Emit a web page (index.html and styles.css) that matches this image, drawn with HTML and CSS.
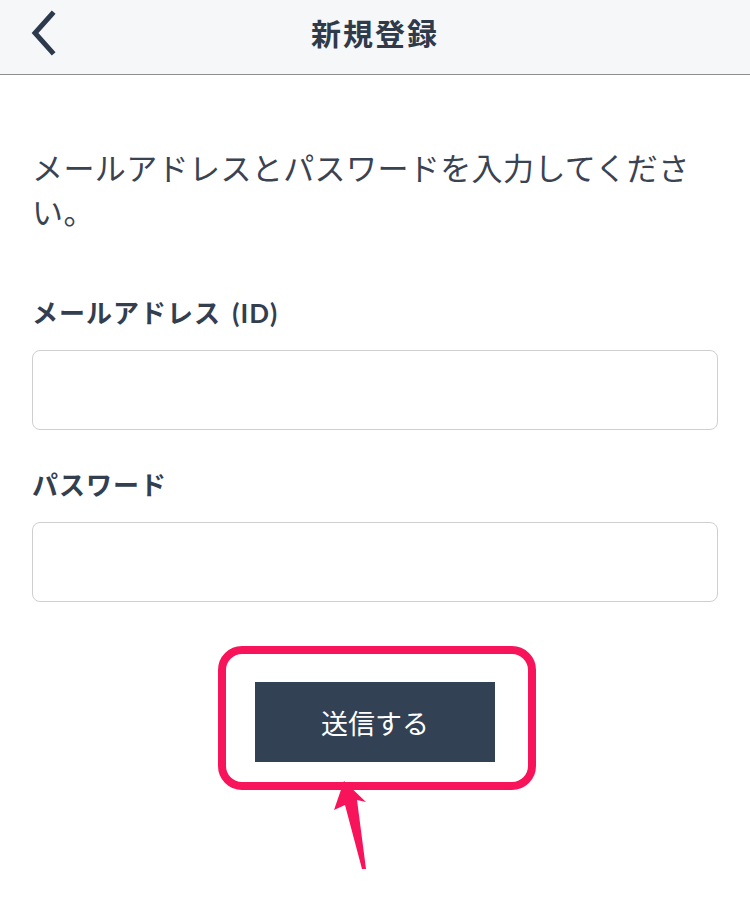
FILE: index.html
```html
<!DOCTYPE html>
<html lang="ja">
<head>
    <meta charset="UTF-8">
    <meta name="viewport" content="width=device-width, initial-scale=1.0">
    <title>新規登録</title>
    <link rel="stylesheet" href="styles.css">
</head>
<body>
    <header class="topbar">
        <a href="#" class="back-btn" aria-label="戻る">
            <svg width="26" height="46" viewBox="0 0 26 46">
                <polyline points="22,4 5,23 22,42" fill="none" stroke="#2d3a4d" stroke-width="5" stroke-linecap="square"/>
            </svg>
        </a>
        <h1 class="title">新規登録</h1>
        <span></span>
    </header>

    <main class="content">
        <p class="intro">メールアドレスとパスワードを入力してください。</p>

        <form class="signup-form">
            <div class="input-group">
                <label for="email">メールアドレス (ID)</label>
                <input type="email" id="email" name="email">
            </div>
            <div class="input-group">
                <label for="password">パスワード</label>
                <input type="password" id="password" name="password">
            </div>

            <div class="submit-row">
                <button type="submit">送信する</button>
                <!-- annotation overlay -->
                <span class="highlight"></span>
                <svg class="pointer" width="40" height="95" viewBox="0 0 40 95">
                    <polygon points="14,0 36,21 27,19 36,88 32,88 15,24 4,29" fill="#f8145a"/>
                </svg>
            </div>
        </form>
    </main>
</body>
</html>
```

FILE: styles.css
```css
* {
    margin: 0;
    padding: 0;
    box-sizing: border-box;
}

:root {
    --text-color: #333e4f;
    --navy: #334155;
    --pink: #f8145a;
}

body {
    width: 750px;
    min-height: 905px;
    background: #fff;
    color: var(--text-color);
    font-family: Lato, "Noto Sans CJK JP", sans-serif;
}

.topbar {
    height: 75px;
    background: #f6f7f8;
    border-bottom: 1px solid #8e8e8e;
    display: grid;
    grid-template-columns: 1fr auto 1fr;
    align-items: center;
    padding: 0 30px;
}

.back-btn {
    display: flex;
    width: 26px;
    height: 46px;
    margin-top: -8px;
}

.title {
    font-size: 30px;
    font-weight: 700;
    letter-spacing: 2px;
    color: #2f3a4b;
    margin-top: -10px;
}

.content {
    padding: 0 32px 150px;
}

.intro {
    margin-top: 71px;
    font-size: 31px;
    line-height: 44px;
    letter-spacing: 0.4px;
    font-weight: 400;
    color: #3a4352;
}

.signup-form {
    margin-top: 61px;
}

.input-group {
    margin-bottom: 37px;
}

.input-group label {
    display: block;
    font-size: 26px;
    line-height: 36px;
    font-weight: 700;
    letter-spacing: 1px;
    word-spacing: 4px;
    margin-bottom: 19px;
}

.input-group input {
    display: block;
    width: 100%;
    height: 80px;
    border: 1px solid #cfcfcf;
    border-radius: 8px;
    padding: 0 16px;
    font-size: 24px;
    outline: none;
}

.submit-row {
    position: relative;
    display: flex;
    justify-content: center;
    margin-top: 80px;
}

button[type="submit"] {
    width: 240px;
    height: 80px;
    background-color: var(--navy);
    color: #fff;
    border: none;
    font-family: "Noto Sans CJK JP", sans-serif;
    font-size: 27px;
    font-weight: 400;
    cursor: pointer;
}

.highlight {
    position: absolute;
    left: 186px;
    top: -36px;
    width: 318px;
    height: 144px;
    border: 8px solid var(--pink);
    border-radius: 24px;
    pointer-events: none;
}

.pointer {
    position: absolute;
    left: 298px;
    top: 99px;
}
```
